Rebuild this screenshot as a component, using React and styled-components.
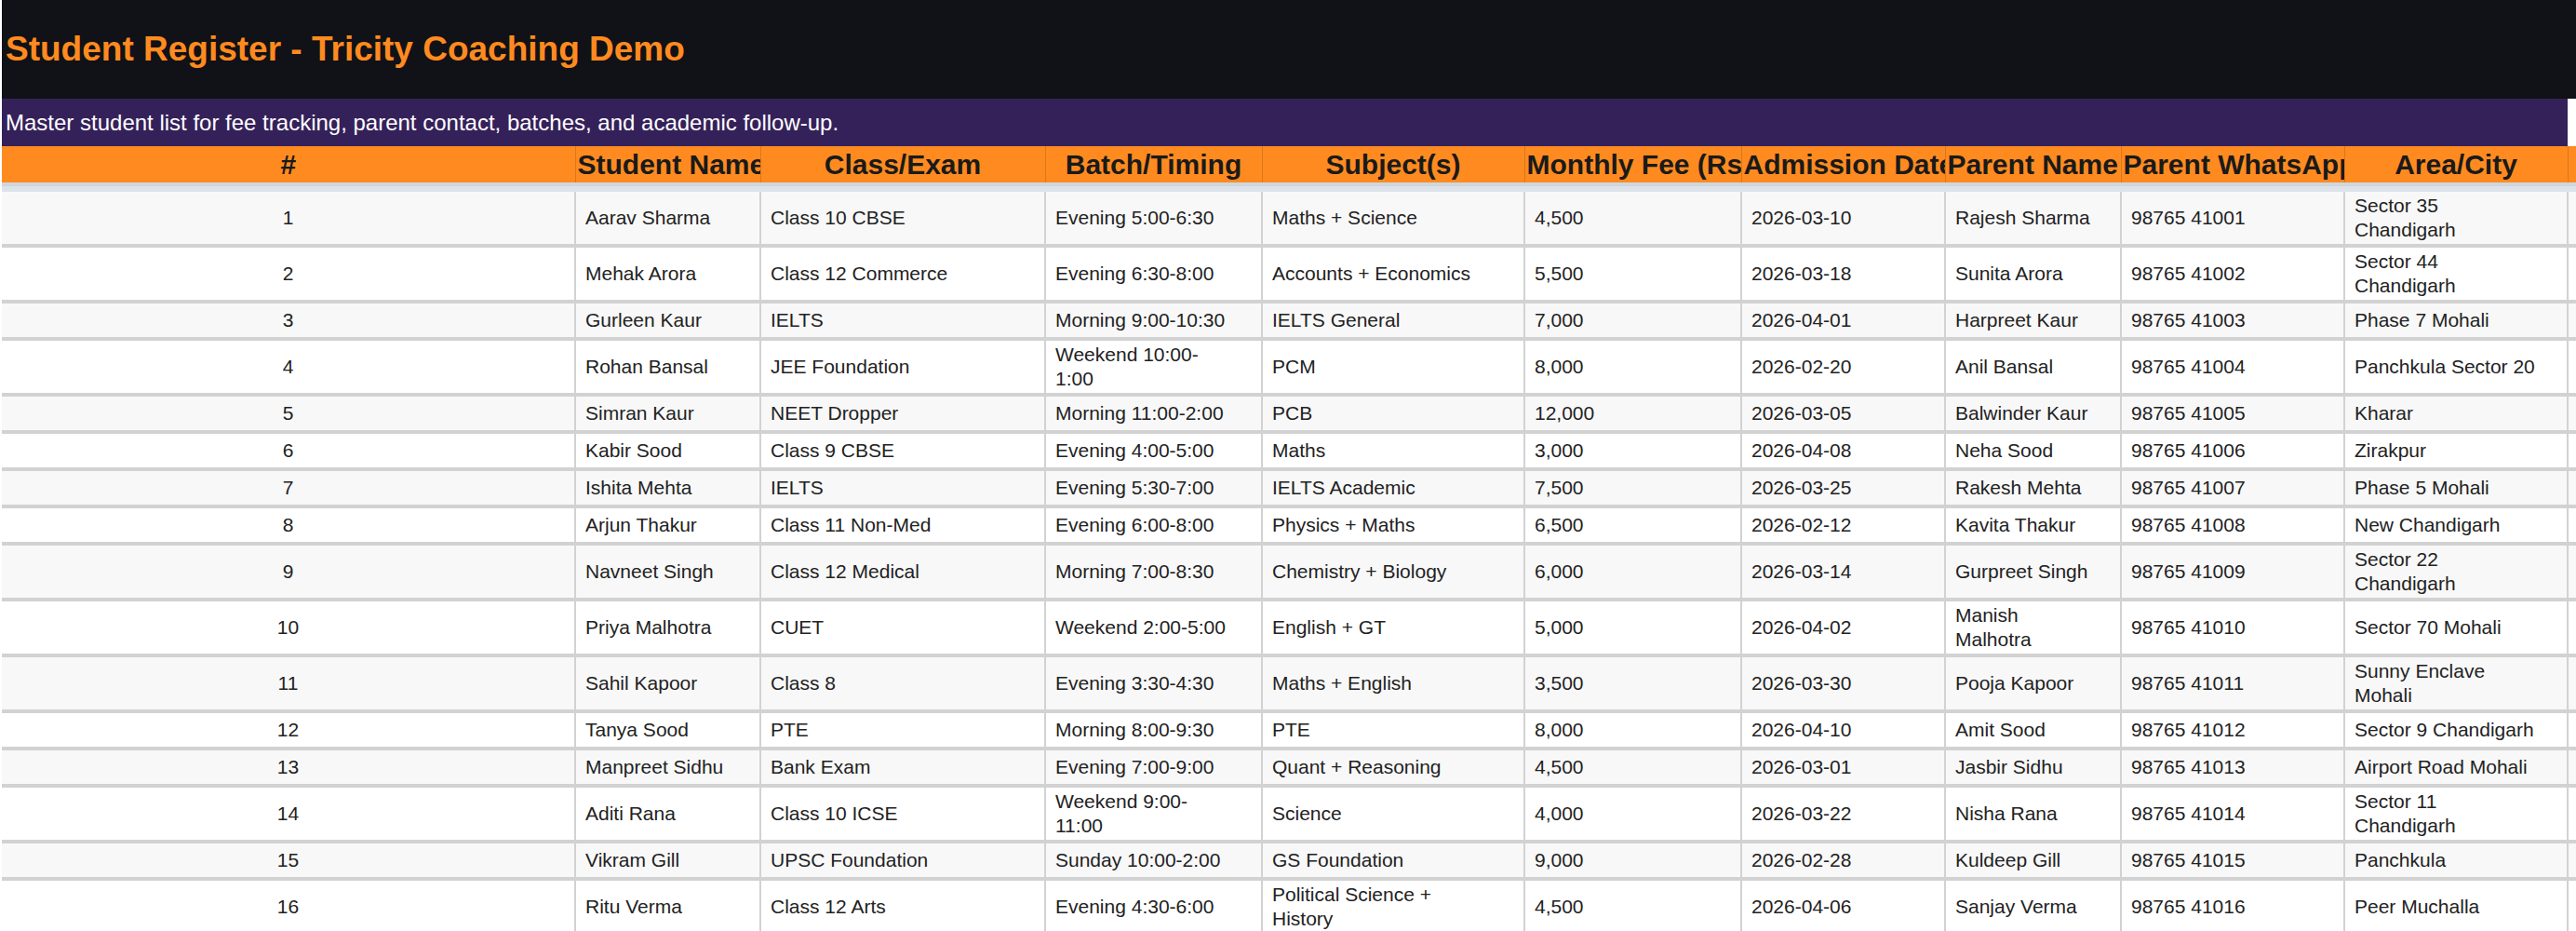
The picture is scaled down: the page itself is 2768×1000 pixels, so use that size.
import React from "react";
import styled, { createGlobalStyle } from "styled-components";

const Global = createGlobalStyle`
  body { margin: 0; background: #fff; font-family: "Liberation Sans", Arial, sans-serif; }
`;

const Sheet = styled.div`
  width: 2768px;
  overflow: hidden;
  padding-left: 2px;
  box-sizing: border-box;
`;

const Table = styled.table`
  border-collapse: collapse;
  table-layout: fixed;
  width: 2780px;
`;

const TitleCell = styled.td`
  background: #111217;
  color: #ff8a1f;
  font-weight: bold;
  font-size: 37px;
  height: 106px;
  padding: 0 4px;
  white-space: nowrap;
`;

const SubCell = styled.td`
  background: #35215a;
  color: #fff;
  font-size: 24px;
  height: 51px;
  padding: 0 4px;
  white-space: nowrap;
`;

const Head = styled.th`
  background: #ff8b20;
  color: #1a1a1a;
  font-size: 30px;
  font-weight: bold;
  height: 39px;
  padding: 0 2px;
  white-space: nowrap;
  overflow: hidden;
  text-align: ${(p) => (p.$left ? "left" : "center")};
  border-right: 1px solid #d9781a;
  border-bottom: 4px solid #cfd6de;
`;

const Gap = styled.td`
  background: #dde3ea;
  height: 6px;
  padding: 0;
`;

const Row = styled.tr`
  background: ${(p) => (p.$alt ? "#f8f8f8" : "#fff")};
`;

const Cell = styled.td`
  border-style: solid;
  border-color: #d2d2d2;
  border-width: 0 2px 4px 0;
  font-size: 21px;
  line-height: 26px;
  color: #222;
  padding: 2px 10px;
  height: ${(p) => (p.$tall ? 52 : 32)}px;
  text-align: ${(p) => (p.$center ? "center" : "left")};
  vertical-align: middle;
  overflow: hidden;
  white-space: pre-line;
`;

const widths = [616, 199, 306, 233, 282, 233, 219, 189, 240, 240, 23];
const headers = ["#", "Student Name", "Class/Exam", "Batch/Timing", "Subject(s)", "Monthly Fee (Rs)", "Admission Date", "Parent Name", "Parent WhatsApp", "Area/City", ""];
const leftHeads = [1, 5, 6, 7, 8];

const data = [
  ["Aarav Sharma", "Class 10 CBSE", "Evening 5:00-6:30", "Maths + Science", "4,500", "2026-03-10", "Rajesh Sharma", "98765 41001", "Sector 35\nChandigarh", 1],
  ["Mehak Arora", "Class 12 Commerce", "Evening 6:30-8:00", "Accounts + Economics", "5,500", "2026-03-18", "Sunita Arora", "98765 41002", "Sector 44\nChandigarh", 1],
  ["Gurleen Kaur", "IELTS", "Morning 9:00-10:30", "IELTS General", "7,000", "2026-04-01", "Harpreet Kaur", "98765 41003", "Phase 7 Mohali", 0],
  ["Rohan Bansal", "JEE Foundation", "Weekend 10:00-\n1:00", "PCM", "8,000", "2026-02-20", "Anil Bansal", "98765 41004", "Panchkula Sector 20", 1],
  ["Simran Kaur", "NEET Dropper", "Morning 11:00-2:00", "PCB", "12,000", "2026-03-05", "Balwinder Kaur", "98765 41005", "Kharar", 0],
  ["Kabir Sood", "Class 9 CBSE", "Evening 4:00-5:00", "Maths", "3,000", "2026-04-08", "Neha Sood", "98765 41006", "Zirakpur", 0],
  ["Ishita Mehta", "IELTS", "Evening 5:30-7:00", "IELTS Academic", "7,500", "2026-03-25", "Rakesh Mehta", "98765 41007", "Phase 5 Mohali", 0],
  ["Arjun Thakur", "Class 11 Non-Med", "Evening 6:00-8:00", "Physics + Maths", "6,500", "2026-02-12", "Kavita Thakur", "98765 41008", "New Chandigarh", 0],
  ["Navneet Singh", "Class 12 Medical", "Morning 7:00-8:30", "Chemistry + Biology", "6,000", "2026-03-14", "Gurpreet Singh", "98765 41009", "Sector 22\nChandigarh", 1],
  ["Priya Malhotra", "CUET", "Weekend 2:00-5:00", "English + GT", "5,000", "2026-04-02", "Manish\nMalhotra", "98765 41010", "Sector 70 Mohali", 1],
  ["Sahil Kapoor", "Class 8", "Evening 3:30-4:30", "Maths + English", "3,500", "2026-03-30", "Pooja Kapoor", "98765 41011", "Sunny Enclave\nMohali", 1],
  ["Tanya Sood", "PTE", "Morning 8:00-9:30", "PTE", "8,000", "2026-04-10", "Amit Sood", "98765 41012", "Sector 9 Chandigarh", 0],
  ["Manpreet Sidhu", "Bank Exam", "Evening 7:00-9:00", "Quant + Reasoning", "4,500", "2026-03-01", "Jasbir Sidhu", "98765 41013", "Airport Road Mohali", 0],
  ["Aditi Rana", "Class 10 ICSE", "Weekend 9:00-\n11:00", "Science", "4,000", "2026-03-22", "Nisha Rana", "98765 41014", "Sector 11\nChandigarh", 1],
  ["Vikram Gill", "UPSC Foundation", "Sunday 10:00-2:00", "GS Foundation", "9,000", "2026-02-28", "Kuldeep Gill", "98765 41015", "Panchkula", 0],
  ["Ritu Verma", "Class 12 Arts", "Evening 4:30-6:00", "Political Science +\nHistory", "4,500", "2026-04-06", "Sanjay Verma", "98765 41016", "Peer Muchalla", 1],
  ["Harsh Bedi", "Class 11 Commerce", "Morning 10:30-\n12:00", "Accounts", "5,000", "2026-03-12", "Deepak Bedi", "98765 41017", "Dhakoli", 1],
];

export default function App() {
  return (
    <Sheet>
      <Global />
      <Table>
        <colgroup>
          {widths.map((w, i) => <col key={i} style={{ width: w }} />)}
        </colgroup>
        <tbody>
          <tr><TitleCell colSpan={11}>Student Register - Tricity Coaching Demo</TitleCell></tr>
          <tr><SubCell colSpan={10}>Master student list for fee tracking, parent contact, batches, and academic follow-up.</SubCell><td /></tr>
          <tr>{headers.map((h, i) => <Head key={i} $left={leftHeads.includes(i)}>{h}</Head>)}</tr>
          <tr><Gap colSpan={11} /></tr>
          {data.map((r, i) => (
            <Row key={i} $alt={i % 2 === 0}>
              <Cell $center $tall={r[9]}>{i + 1}</Cell>
              {r.slice(0, 9).map((c, j) => (
                <Cell key={j} $tall={r[9]}>{c}</Cell>
              ))}
              <Cell $tall={r[9]} />
            </Row>
          ))}
        </tbody>
      </Table>
    </Sheet>
  );
}
